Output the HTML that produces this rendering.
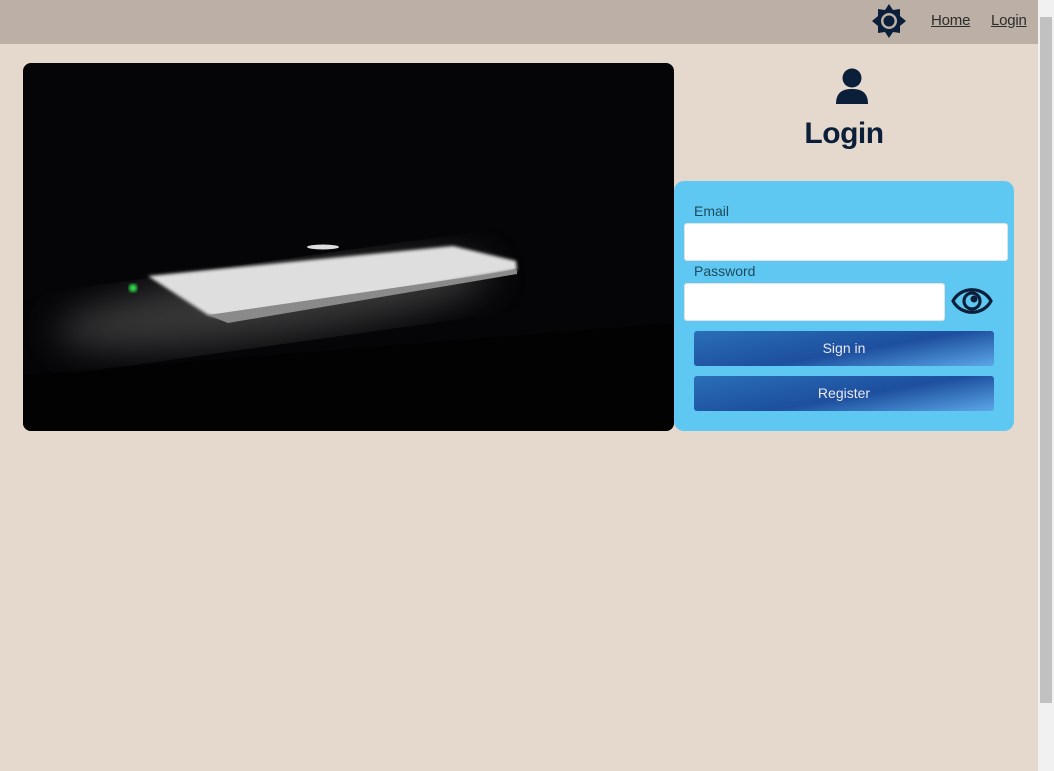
<!DOCTYPE html>
<html><head><meta charset="utf-8"><style>
*{box-sizing:border-box;margin:0;padding:0}
body{width:1054px;height:771px;overflow:hidden;background:#e5d9ce;font-family:"Liberation Sans",sans-serif;position:relative}
.top{position:absolute;left:0;top:0;width:1038px;height:44px;background:#bcb0a6}
.nav a{position:absolute;top:12px;font-size:15px;color:#2c2c2c;text-decoration:underline;letter-spacing:-0.2px}
.sb{position:absolute;left:1038px;top:0;width:16px;height:771px;background:#f1f1f1}
.thumb{position:absolute;left:1040px;top:17px;width:12px;height:686px;background:#c1c1c1}
.img{position:absolute;left:23px;top:63px;width:651px;height:368px;border-radius:8px;overflow:hidden;background:#050507}
.card{position:absolute;left:674px;top:181px;width:340px;height:250px;background:#5fc8f2;border-radius:10px}
.lbl{position:absolute;left:20px;font-size:14px;color:#1f4a5e}
.inp{position:absolute;left:10px;background:#fff;border:1px solid #e2e2e2;border-radius:3px;height:38px}
.btn{position:absolute;left:20px;width:300px;height:35px;border-radius:3px;color:#e8e8ee;font-size:14px;text-align:center;line-height:35px;background:linear-gradient(170deg,#2a6fb8 0%,#1d4f9e 55%,#5ba7e8 100%)}
h1{position:absolute;left:674px;width:340px;top:117px;text-align:center;font-size:30px;font-weight:bold;color:#0b1f3a;letter-spacing:-0.5px}
</style></head><body>
<div class="top"></div>
<svg style="position:absolute;left:872px;top:4px" width="34" height="34" viewBox="0 0 34 34">
<polygon fill="#0b1f3a" points="17,0 21,6 28,5 28,12 34,17 28,22 28,29 21,28 17,34 13,28 6,29 6,22 0,17 6,12 6,5 13,6"/>
<circle cx="17" cy="17" r="8" fill="#bcb0a6"/><circle cx="17" cy="17" r="5.5" fill="#0b1f3a"/></svg>
<div class="nav"><a style="left:931px">Home</a><a style="left:991px">Login</a></div>
<div class="sb"></div><div class="thumb"></div>
<div class="img"><svg width="651" height="368">
<defs><filter id="b"><feGaussianBlur stdDeviation="18"/></filter><filter id="b2"><feGaussianBlur stdDeviation="1.5"/></filter></defs>
<polygon points="0,312 651,260 651,368 0,368" fill="#020203"/>
<ellipse cx="250" cy="240" rx="220" ry="35" fill="#5a5a5a" opacity="0.6" filter="url(#b)" transform="rotate(-8 250 240)"/>
<polygon points="125,213 430,183 493,198 494,207 205,256 185,252" fill="#dedede" filter="url(#b2)"/>
<polygon points="185,252 494,207 494,211 205,260" fill="#8a8a8a"/>
<ellipse cx="300" cy="184" rx="16" ry="2.5" fill="#ddd"/>
<circle cx="110" cy="225" r="4" fill="#2fe04a" filter="url(#b2)"/>
</svg></div>
<svg style="position:absolute;left:835px;top:68px" width="34" height="37" viewBox="0 0 34 37">
<circle cx="17" cy="10" r="9.5" fill="#0b1f3a"/><path d="M1 36 C1 24 8 21 17 21 C26 21 33 24 33 36 Z" fill="#0b1f3a"/></svg>
<h1>Login</h1>
<div class="card">
<div class="lbl" style="top:22px">Email</div>
<div class="inp" style="top:42px;width:324px"></div>
<div class="lbl" style="top:82px">Password</div>
<div class="inp" style="top:102px;width:261px"></div>
<svg style="position:absolute;left:277px;top:103px" width="42" height="34" viewBox="0 0 42 34">
<path d="M2 17 C10 2 32 2 40 17 C32 32 10 32 2 17 Z" fill="none" stroke="#0b1f3a" stroke-width="3.2"/>
<circle cx="21" cy="17" r="8" fill="none" stroke="#0b1f3a" stroke-width="3.2"/><circle cx="23" cy="15" r="3.5" fill="#0b1f3a"/></svg>
<div class="btn" style="top:150px">Sign in</div>
<div class="btn" style="top:195px">Register</div>
</div>
</body></html>
